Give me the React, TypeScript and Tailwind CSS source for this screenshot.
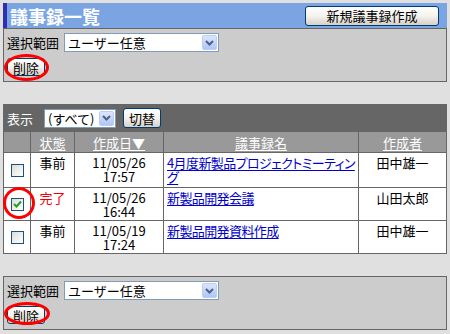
import React from "react";

const font = "font-['Noto_Sans_CJK_JP','Noto_Sans_CJK_SC',sans-serif]";

function Chevron() {
  return (
    <svg width="9" height="6" viewBox="0 0 9 6">
      <path d="M1 1 L4.5 4.5 L8 1" fill="none" stroke="#4d6185" strokeWidth="2" />
    </svg>
  );
}

function XPSelect({ className, text }: { className: string; text: string }) {
  return (
    <div className={`flex h-[19px] items-center border border-[#7f9db9] bg-white ${className}`}>
      <span className="flex-1 pl-[3px] text-[13px] leading-none text-black whitespace-nowrap">{text}</span>
      <span className="mr-px flex h-[15px] w-[15px] items-center justify-center rounded-[2px] border border-[#b9cdf5] bg-linear-to-b from-[#dce7fd] to-[#b0c5f5]">
        <Chevron />
      </span>
    </div>
  );
}

function XPButton({ className, children }: { className: string; children: React.ReactNode }) {
  return (
    <div
      className={`flex items-center justify-center rounded-[3px] border border-[#003c74] bg-linear-to-b from-white via-[#f4f3ee] to-[#d6d0c5] text-[13px] leading-none text-black ${className}`}
    >
      {children}
    </div>
  );
}

function Checkbox({ checked }: { checked?: boolean }) {
  return (
    <div className="flex h-[13px] w-[13px] items-center justify-center border border-[#1c5180] bg-linear-to-br from-[#dcdcd7] to-white">
      {checked && (
        <svg width="9" height="8" viewBox="0 0 9 8">
          <path d="M1 4 L3.5 6.5 L8 1.5" fill="none" stroke="#21a121" strokeWidth="2" />
        </svg>
      )}
    </div>
  );
}

function Panel() {
  return (
    <div className="h-[54px] border border-[#666666] bg-[#cccccc] pl-[3px] pt-[4px]">
      <div className="flex items-center gap-[5px]">
        <span className="text-[13px] leading-none">選択範囲</span>
        <XPSelect className="w-[155px]" text="ユーザー任意" />
      </div>
      <XPButton className="mt-[6px] h-[18px] w-[38px]">削除</XPButton>
    </div>
  );
}

const rows = [
  {
    checked: false,
    status: "事前",
    red: false,
    date: "11/05/26",
    time: "17:57",
    lines: ["4月度新製品プロジェクトミーティン", "グ"],
    author: "田中雄一",
    h: "h-[34px]",
  },
  {
    checked: true,
    status: "完了",
    red: true,
    date: "11/05/26",
    time: "16:44",
    lines: ["新製品開発会議"],
    author: "山田太郎",
    h: "h-[32px]",
  },
  {
    checked: false,
    status: "事前",
    red: false,
    date: "11/05/19",
    time: "17:24",
    lines: ["新製品開発資料作成"],
    author: "田中雄一",
    h: "h-[32px]",
  },
];

export default function App() {
  return (
    <div className={`relative h-[334px] w-[450px] overflow-hidden bg-[#e0e0e0] px-[3px] pt-[3px] text-black ${font}`}>
      <div className="w-[444px]">
        {/* Title bar */}
        <div className="flex h-[25px] items-center justify-between border-l-4 border-[#2f2fb3] bg-[#7ba4e3] pl-[3px] pr-[8px]">
          <span className="text-[18px] font-bold leading-none text-white">議事録一覧</span>
          <XPButton className="h-[20px] w-[134px]">新規議事録作成</XPButton>
        </div>

        <Panel />

        {/* Table section */}
        <div className="mt-[22px] bg-[#666666] px-px pb-px">
          <div className="flex h-[28px] items-center pl-[3px]">
            <span className="text-[13px] leading-none text-white">表示</span>
            <XPSelect className="ml-[11px] w-[72px]" text="(すべて)" />
            <XPButton className="ml-[7px] h-[20px] w-[38px]">切替</XPButton>
          </div>
          <div className="grid grid-cols-[26px_43px_88px_194px_87px] gap-px text-[13px]">
            <div className="h-[20px] bg-[#999999]" />
            {["状態", "作成日▼", "議事録名", "作成者"].map((t) => (
              <div key={t} className="flex h-[20px] items-center justify-center bg-[#999999] leading-none text-white underline underline-offset-2">
                {t}
              </div>
            ))}
            {rows.map((r, i) => (
              <React.Fragment key={i}>
                <div className={`flex items-center justify-center bg-white ${r.h}`}>
                  <Checkbox checked={r.checked} />
                </div>
                <div className={`bg-white pt-[3px] text-center ${r.h} ${r.red ? "text-[#ee0000]" : ""}`}>
                  <div className="h-[14px] leading-[14px]">{r.status}</div>
                </div>
                <div className={`bg-white pt-[3px] text-center ${r.h}`}>
                  <div className="h-[14px] leading-[14px]">{r.date}</div>
                  <div className="h-[14px] leading-[14px]">{r.time}</div>
                </div>
                <div className={`bg-white pl-[3px] pt-[3px] ${r.h}`}>
                  {r.lines.map((l) => (
                    <div key={l} className="h-[14px] leading-[14px] whitespace-nowrap">
                      <span className="text-[#0000cc] underline underline-offset-2 tracking-[-0.6px] [font-feature-settings:'palt']">{l}</span>
                    </div>
                  ))}
                </div>
                <div className={`bg-white pt-[3px] text-center ${r.h}`}>
                  <div className="h-[14px] leading-[14px]">{r.author}</div>
                </div>
              </React.Fragment>
            ))}
          </div>
        </div>

        <div className="mt-[22px]">
          <Panel />
        </div>
      </div>

      {/* Red annotation marks */}
      <svg className="pointer-events-none absolute left-0 top-0" width="450" height="334">
        <ellipse cx="26.5" cy="67.5" rx="21" ry="12" fill="none" stroke="#ff0000" strokeWidth="3" />
        <circle cx="19" cy="203" r="14.5" fill="none" stroke="#ff0000" strokeWidth="3" />
        <ellipse cx="27" cy="313.5" rx="21.5" ry="10" fill="none" stroke="#ff0000" strokeWidth="3" />
      </svg>
    </div>
  );
}
